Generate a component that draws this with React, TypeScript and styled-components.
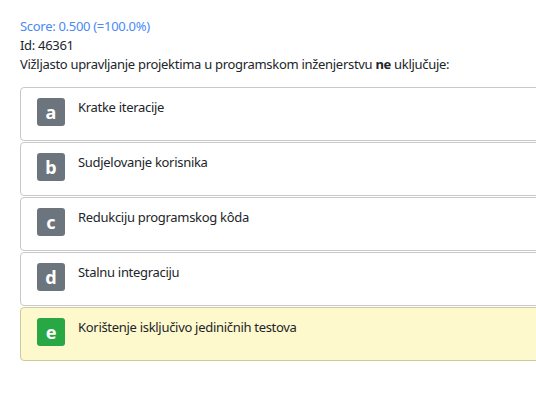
import React from 'react';
import styled, { createGlobalStyle } from 'styled-components';

const GlobalStyle = createGlobalStyle`
    body {
        margin: 0;
        background: #fff;
        font-family: "Noto Sans", "Open Sans", sans-serif;
        color: #212529;
        letter-spacing: -0.3px;
    }
`;

const Page = styled.main`
    padding: 17px 0 0 20px;
    overflow: hidden;
`;

const Score = styled.div`
    font-size: 13px;
    line-height: 19px;
    color: #4a8af4;
`;

const Meta = styled.div`
    font-size: 13px;
    line-height: 19px;
`;

const Question = styled.p`
    font-size: 13px;
    line-height: 19px;
    margin: 0 0 13px 0;

    b { font-weight: bold; }
`;

const Answers = styled.div`
    display: flex;
    flex-direction: column;
    gap: 1px;
    width: 540px;
`;

const Answer = styled.div<{ $correct?: boolean }>`
    display: flex;
    align-items: flex-start;
    gap: 13px;
    height: 54px;
    box-sizing: border-box;
    padding: 10px 16px;
    border: 1px solid ${p => (p.$correct ? '#cfc9a2' : '#c8c8c8')};
    border-radius: 4px;
    background: ${p => (p.$correct ? '#fef8cd' : '#fff')};
`;

const Badge = styled.span<{ $correct?: boolean }>`
    flex: none;
    width: 28px;
    height: 28px;
    border-radius: 3px;
    display: flex;
    align-items: center;
    justify-content: center;
    background: ${p => (p.$correct ? '#28a745' : '#6c757d')};
    color: #fff;
    font-size: 18px;
    font-weight: bold;
    line-height: 1;
    letter-spacing: 0;
`;

const AnswerText = styled.span`
    font-size: 13px;
    line-height: 18px;
`;

const answers = [
    { letter: 'a', text: 'Kratke iteracije' },
    { letter: 'b', text: 'Sudjelovanje korisnika' },
    { letter: 'c', text: 'Redukciju programskog kôda' },
    { letter: 'd', text: 'Stalnu integraciju' },
    { letter: 'e', text: 'Korištenje isključivo jediničnih testova', correct: true },
];

const App: React.FC = () => {
    return (
        <Page>
            <GlobalStyle />
            <Score>Score: 0.500 (=100.0%)</Score>
            <Meta>Id: 46361</Meta>
            <Question>
                Vižljasto upravljanje projektima u programskom inženjerstvu <b>ne</b> uključuje:
            </Question>
            <Answers>
                {answers.map(a => (
                    <Answer key={a.letter} $correct={a.correct}>
                        <Badge $correct={a.correct}>{a.letter}</Badge>
                        <AnswerText>{a.text}</AnswerText>
                    </Answer>
                ))}
            </Answers>
        </Page>
    );
};

export default App;
